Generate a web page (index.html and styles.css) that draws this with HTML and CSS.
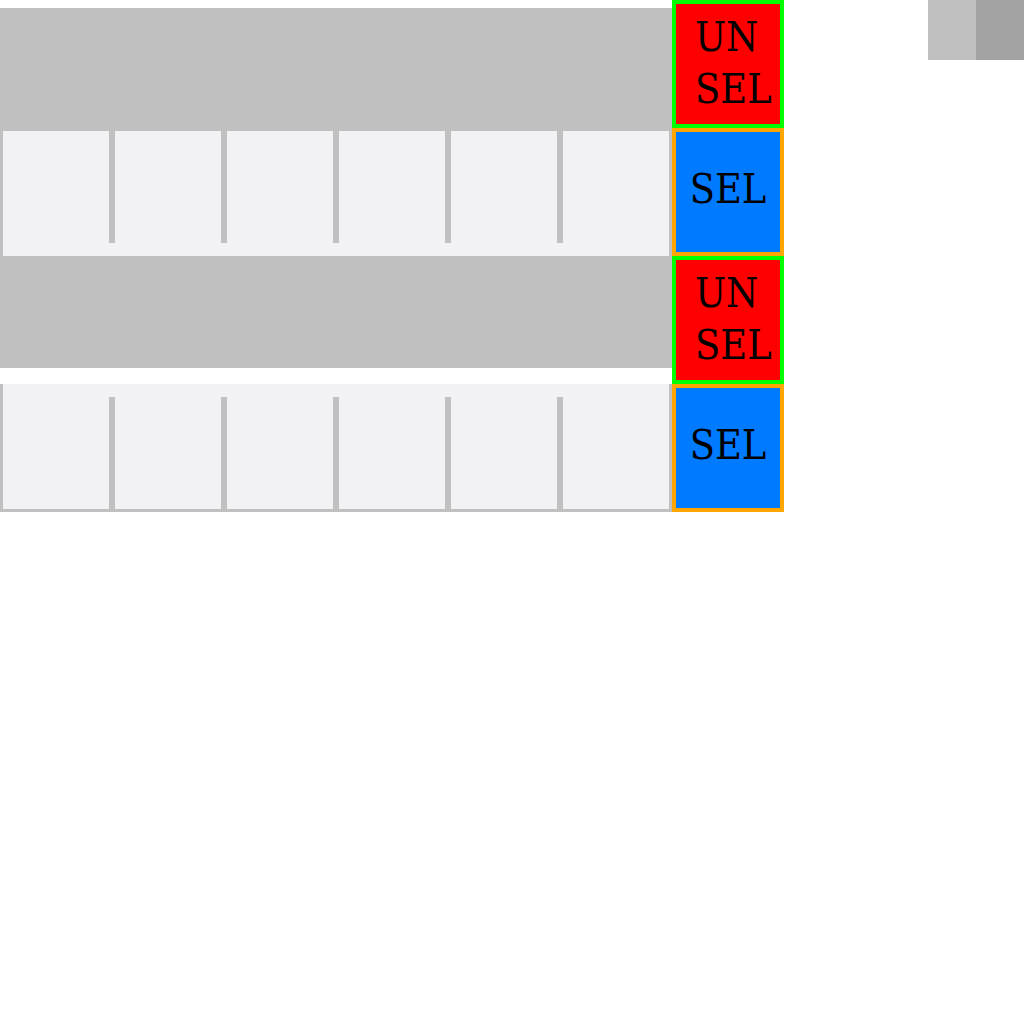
FILE: index.html
```html
<!DOCTYPE html>
<html lang="en">

<head>
    <meta charset="UTF-8">
    <meta name="viewport" content="width=device-width, initial-scale=1.0">
    <title>Selection List</title>
    <link rel="stylesheet" href="styles.css">
</head>

<body>
    <div class="list">

        <!-- unselected row: plain grey panel -->
        <div class="row">
            <div class="panel panel-first"></div>
            <button class="toggle unsel">UN SEL</button>
        </div>

        <!-- selected row: cells with ticks from the top -->
        <div class="row">
            <div class="cells cells-top">
                <div class="cell"></div><span class="tick"></span>
                <div class="cell"></div><span class="tick"></span>
                <div class="cell"></div><span class="tick"></span>
                <div class="cell"></div><span class="tick"></span>
                <div class="cell"></div><span class="tick"></span>
                <div class="cell"></div>
            </div>
            <button class="toggle sel">SEL</button>
        </div>

        <div class="row">
            <div class="panel panel-mid"></div>
            <button class="toggle unsel">UN SEL</button>
        </div>

        <!-- ticks hang from the bottom on this one -->
        <div class="row">
            <div class="cells cells-bottom">
                <div class="cell"></div><span class="tick"></span>
                <div class="cell"></div><span class="tick"></span>
                <div class="cell"></div><span class="tick"></span>
                <div class="cell"></div><span class="tick"></span>
                <div class="cell"></div><span class="tick"></span>
                <div class="cell"></div>
            </div>
            <button class="toggle sel">SEL</button>
        </div>

    </div>

    <div class="corner">
        <div class="corner-a"></div>
        <div class="corner-b"></div>
    </div>
</body>

</html>
```

FILE: styles.css
```css
body {
    margin: 0;
    padding: 0;
    background-color: #ffffff;
    font-family: 'DejaVu Serif', serif;
    display: flex;
    justify-content: space-between;
    align-items: flex-start;
}

.list {
    display: flex;
    flex-direction: column;
    width: 784px;
}

.row {
    display: flex;
    height: 128px;
}

/* grey panels */
.panel {
    width: 672px;
    background-color: #c0c0c0;
}

.panel-first {
    margin-top: 8px;
    height: 120px;
}

.panel-mid {
    height: 112px;
}

/* cell strips */
.cells {
    box-sizing: border-box;
    width: 672px;
    height: 128px;
    display: flex;
    background-color: #f2f2f4;
    border-left: 3px solid #c0c0c0;
    border-right: 3px solid #c0c0c0;
}

.cells-top {
    border-top: 3px solid #c0c0c0;
    align-items: flex-start;
}

.cells-bottom {
    border-bottom: 3px solid #c0c0c0;
    align-items: flex-end;
}

.cell {
    width: 106px;
}

.tick {
    width: 6px;
    height: 112px;
    background-color: #c0c0c0;
}

/* toggle buttons */
.toggle {
    box-sizing: border-box;
    width: 112px;
    height: 128px;
    margin: 0;
    padding: 0;
    border: 4px solid;
    font-family: 'DejaVu Serif', serif;
    font-stretch: condensed;
    font-size: 41px;
    line-height: 52px;
    color: #000000;
    cursor: pointer;
}

.unsel {
    background-color: #ff0000;
    border-color: #00ff00;
    text-align: left;
    padding: 0 0 2px 19px;
}

.sel {
    background-color: #007aff;
    border-color: #ffa500;
    text-align: center;
    padding-bottom: 6px;
}

/* corner widget */
.corner {
    display: flex;
}

.corner-a {
    width: 48px;
    height: 60px;
    background-color: #c0c0c0;
}

.corner-b {
    width: 48px;
    height: 60px;
    background-color: #a3a3a3;
}
```
